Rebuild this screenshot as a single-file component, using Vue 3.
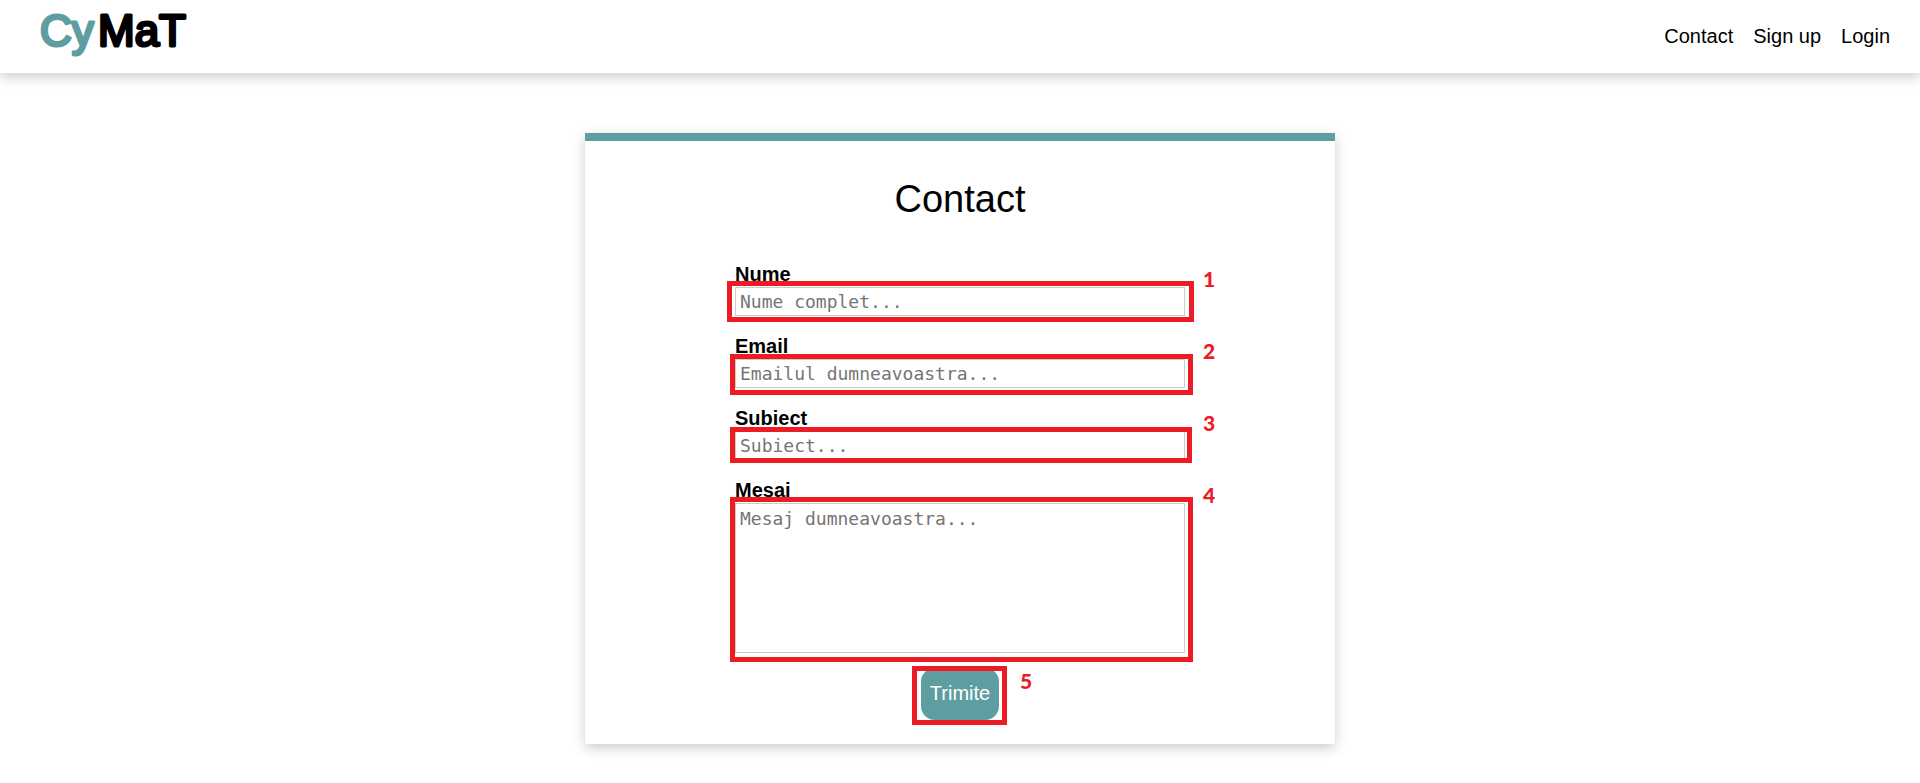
<script setup>
import { reactive } from 'vue'

const form = reactive({ nume: '', email: '', subiect: '', mesaj: '' })

const links = ['Contact', 'Sign up', 'Login']

const fields = [
  { id: 'nume', label: 'Nume', hint: 'Nume complet...', type: 'text' },
  { id: 'email', label: 'Email', hint: 'Emailul dumneavoastra...', type: 'email' },
  { id: 'subiect', label: 'Subiect', hint: 'Subiect...', type: 'text' }
]
</script>

<template>
  <div class="page">
    <header class="bar">
      <a href="#" class="logo" aria-label="CyMaT">
        <svg class="logo-art" width="170" height="60" viewBox="0 0 170 60">
          <text class="cy" x="10" y="46">Cy</text>
          <text class="mat" x="68" y="46">MaT</text>
        </svg>
      </a>
      <nav class="nav">
        <a v-for="link in links" :key="link" href="#">{{ link }}</a>
      </nav>
    </header>

    <main class="card">
      <h1>Contact</h1>
      <form class="form" @submit.prevent>
        <div v-for="(f, i) in fields" :key="f.id" class="field">
          <label :for="f.id">{{ f.label }}</label>
          <div class="control">
            <input :id="f.id" v-model="form[f.id]" :type="f.type" :placeholder="f.hint" />
            <span class="frame" :class="'frame-' + f.id"></span>
            <span class="num">{{ i + 1 }}</span>
          </div>
        </div>
        <div class="field field-last">
          <label for="mesaj">Mesaj</label>
          <div class="control">
            <textarea id="mesaj" v-model="form.mesaj" placeholder="Mesaj dumneavoastra..."></textarea>
            <span class="frame frame-mesaj"></span>
            <span class="num">4</span>
          </div>
        </div>
        <div class="control action">
          <button type="submit">Trimite</button>
          <span class="frame frame-send"></span>
          <span class="num num-send">5</span>
        </div>
      </form>
    </main>
  </div>
</template>

<style>
body {
  margin: 0;
  background: #fff;
}
</style>

<style scoped>
.page {
  box-sizing: border-box;
  min-height: 100vh;
  padding-bottom: 30px;
  background: #fff;
  font-family: "Liberation Sans", Arial, sans-serif;
  font-size: 20px;
  line-height: 23px;
  color: #000;
}

.bar {
  box-sizing: border-box;
  display: flex;
  align-items: center;
  justify-content: space-between;
  min-height: 73px;
  padding: 0 30px;
  box-shadow: 0 4px 12px rgba(0, 0, 0, 0.2);
}

.logo {
  display: block;
  padding-bottom: 13px;
}

.logo-art {
  display: block;
}

.logo-art text {
  font-family: "Liberation Sans", Arial, sans-serif;
  font-size: 44px;
  stroke-width: 3px;
  stroke-linejoin: round;
}

.cy {
  fill: #5f9ea0;
  stroke: #5f9ea0;
}

.mat {
  fill: #000;
  stroke: #000;
}

.nav {
  display: flex;
  gap: 20px;
}

.nav a {
  color: #000;
  text-decoration: none;
}

.card {
  box-sizing: border-box;
  max-width: 750px;
  margin: 60px auto 0;
  padding: 36px 0 24px;
  border-top: 8px solid #5f9ea0;
  background: #fff;
  box-shadow: 0 4px 12px rgba(0, 0, 0, 0.2);
}

h1 {
  margin: 0 0 42px;
  font-size: 38px;
  line-height: 44px;
  font-weight: 400;
  text-align: center;
}

.form {
  width: 60%;
  margin: 0 auto;
  display: flex;
  flex-direction: column;
}

.field {
  margin-bottom: 19px;
}

.field-last {
  margin-bottom: 15px;
}

.field label {
  display: block;
  padding-bottom: 1px;
  font-weight: 700;
}

.control {
  position: relative;
}

input,
textarea {
  display: block;
  box-sizing: border-box;
  width: 100%;
  margin: 0;
  padding: 3px 4px;
  border: 1px solid #ccc;
  border-radius: 0;
  background: #fff;
  font-family: "DejaVu Sans Mono", monospace;
  font-size: 18px;
  line-height: 23px;
  color: #000;
  outline: none;
}

input {
  height: 29px;
}

textarea {
  height: 150px;
  resize: none;
}

input::placeholder,
textarea::placeholder {
  color: #757575;
  opacity: 1;
}

.action {
  align-self: center;
}

button {
  display: block;
  min-width: 78px;
  height: 52px;
  padding: 0 8px 2px;
  border: 0;
  border-radius: 14px;
  background: #5f9ea0;
  color: #fff;
  font-family: inherit;
  font-size: 20px;
  line-height: 23px;
  cursor: pointer;
}

/* numbered call-outs drawn over the form */
.frame {
  position: absolute;
  inset: -5px -8px -7px -5px;
  border: 5px solid #ed1c24;
  pointer-events: none;
}

.frame-nume {
  inset: -6px -9px -6px -8px;
}

.frame-subiect {
  inset: -4px -7px -3px -5px;
}

.frame-mesaj {
  inset: -6px -8px -9px -5px;
}

.frame-send {
  inset: -2px -8px -5px -9px;
}

.num {
  position: absolute;
  top: -16px;
  left: calc(100% + 18px);
  color: #ed1c24;
  font-family: Lato, sans-serif;
  font-size: 21px;
  font-weight: 900;
  line-height: 15px;
}

.num-send {
  top: 5px;
  left: calc(100% + 21px);
}
</style>
